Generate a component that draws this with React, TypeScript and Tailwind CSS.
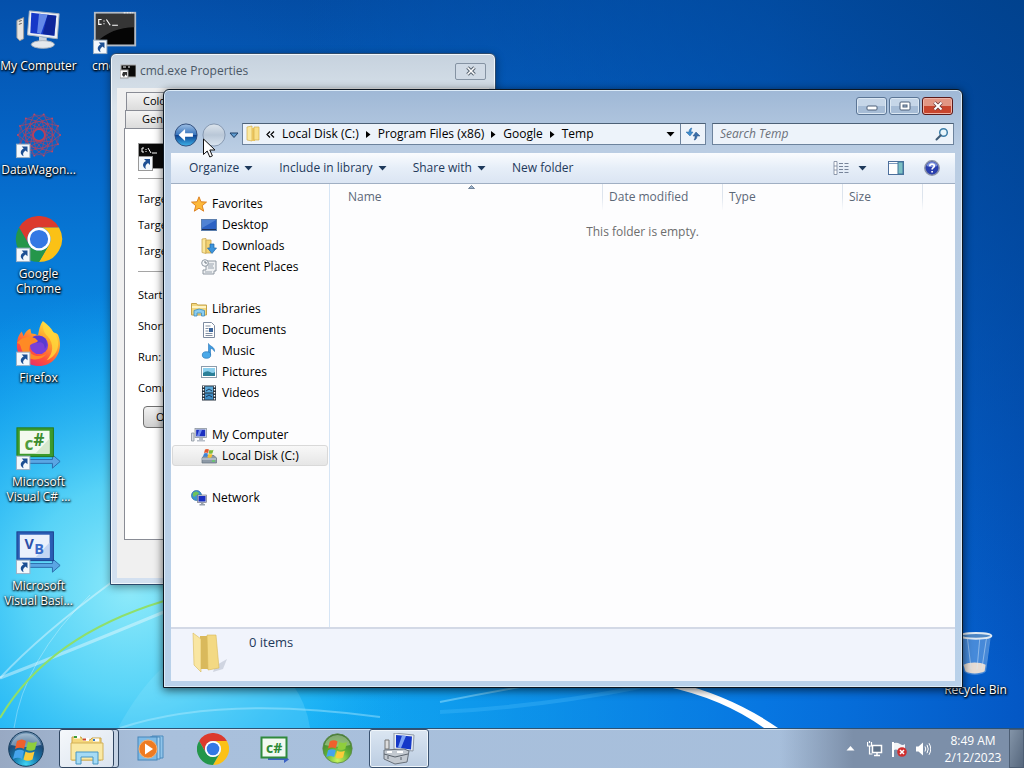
import type { ReactNode } from "react";

function Wallpaper() {
  return (
    <svg className="absolute inset-0 h-full w-full" viewBox="0 0 1024 768" preserveAspectRatio="none" aria-hidden="true">
      <defs>
        <linearGradient id="wp-base" x1="0" y1="0" x2="0" y2="1">
          <stop offset="0" stopColor="#0450ab" />
          <stop offset="0.2" stopColor="#0566c8" />
          <stop offset="0.45" stopColor="#0a8ce4" />
          <stop offset="0.75" stopColor="#12a8f2" />
          <stop offset="1" stopColor="#12aef5" />
        </linearGradient>
        <radialGradient id="wp-glow" gradientUnits="userSpaceOnUse" cx="130" cy="590" r="300">
          <stop offset="0" stopColor="#8eeafa" />
          <stop offset="0.35" stopColor="#5fd8f8" stopOpacity="0.9" />
          <stop offset="0.7" stopColor="#2cbdf6" stopOpacity="0.5" />
          <stop offset="1" stopColor="#12a4f2" stopOpacity="0" />
        </radialGradient>
        <linearGradient id="wp-right" x1="0" y1="0" x2="1" y2="0">
          <stop offset="0.3" stopColor="#0468d6" stopOpacity="0" />
          <stop offset="0.75" stopColor="#0468dc" stopOpacity="0.8" />
          <stop offset="1" stopColor="#0457c4" />
        </linearGradient>
        <linearGradient id="wp-dark" x1="0" y1="1" x2="1" y2="0">
          <stop offset="0.55" stopColor="#01428e" stopOpacity="0" />
          <stop offset="1" stopColor="#01428e" />
        </linearGradient>
      </defs>
      <rect width="1024" height="768" fill="url(#wp-base)" />
      <rect width="1024" height="768" fill="url(#wp-right)" />
      <rect width="1024" height="768" fill="url(#wp-dark)" />
      <rect width="1024" height="768" fill="url(#wp-glow)" />
      <path d="M118 728 Q160 650 215 640 Q300 660 310 728Z" fill="#9eeaff" opacity="0.2" />
      <path d="M0 678 Q60 655 164 612" fill="none" stroke="#fff" strokeWidth="3" opacity="0.4" />
      <path d="M0 678 Q40 635 112 582" fill="none" stroke="#fff" strokeWidth="2" opacity="0.4" />
      <path d="M14 728 Q24 660 90 595" fill="none" stroke="#fff" strokeWidth="1" opacity="0.3" />
      <path d="M0 718 Q48 636 164 601" fill="none" stroke="#8fdf6a" strokeWidth="2" />
      <path d="M120 728 Q220 695 380 717" fill="none" stroke="#bff0ff" strokeWidth="2" opacity="0.4" />
      <path d="M440 702 Q480 694 520 687" fill="none" stroke="#9be4ff" strokeWidth="2" opacity="0.5" />
      <path d="M440 712 Q540 707 640 687" fill="none" stroke="#5bc8ff" strokeWidth="4" opacity="0.25" />
      <path d="M664 686 Q722 698 764 728 H778 Q732 696 674 682Z" fill="#fff" />
    </svg>
  );
}

function ShortcutArrow() {
  return (
    <g transform="translate(0 33)">
      <rect x="0.5" y="0.5" width="14" height="14" fill="#f4f8fc" stroke="#9db0c4" />
      <path d="M6 3h6v6l-2-2c-3 2-3 4-2 6-4-2-4-6 0-8z" fill="#1d4f93" />
    </g>
  );
}

function ComputerArt() {
  return (
    <>
      <path d="M1 13l7-3v22l-4 2-3-3z" fill="#e7e4df" stroke="#9a9a9a" />
      <path d="M3 14l3-1M3 17l3-1" stroke="#555" />
      <path d="M14 3l31 3-2 26-31-4z" fill="#e9eef4" stroke="#a9b3bf" />
      <path d="M16 5l26 3-2 21-25-3z" fill="#1538c8" />
      <path d="M24 6l9 1-7 20-4-1z" fill="#7fa4f4" opacity="0.75" />
      <path d="M33 7l9 1-2 21-12-2z" fill="#0a1f86" opacity="0.7" />
      <path d="M24 30l8 1v7h-8z" fill="#c9d2dc" />
      <ellipse cx="28" cy="38" rx="12" ry="4" fill="#e4e8ed" stroke="#aab2bb" />
    </>
  );
}

function CmdArt() {
  return (
    <>
      <rect x="2" y="5" width="42" height="34" fill="#050505" stroke="#b4bcc6" strokeWidth="2" />
      <path d="M3 6h40v14Q20 20 3 36z" fill="#4a4a4a" opacity="0.7" />
      <path d="M32 5h10" stroke="#fff" strokeDasharray="2 1" />
      <path d="M9 12H6v5h3M11.5 13v1M11.5 16v1M14 12l4 6M20 18h6" fill="none" stroke="#fff" strokeWidth="1.2" />
    </>
  );
}

function ChromeArt() {
  return (
    <>
      <path d="M24 12H44.8A24 24 0 0 0 3.2 12L13.6 30A12 12 0 0 1 24 12z" fill="#dc3a2d" />
      <path d="M24 12H44.8A24 24 0 0 1 24 48L34.4 30A12 12 0 0 0 24 12z" fill="#fbc116" />
      <path d="M34.4 30L24 48A24 24 0 0 1 3.2 12L13.6 30A12 12 0 0 0 34.4 30z" fill="#24964a" />
      <circle cx="24" cy="24" r="12" fill="#fff" />
      <circle cx="24" cy="24" r="9.5" fill="#3478e4" />
    </>
  );
}

function FirefoxArt() {
  return (
    <>
      <defs>
        <linearGradient id="ff-body" x1="0.8" y1="0" x2="0.2" y2="1">
          <stop offset="0" stopColor="#fff04a" />
          <stop offset="0.35" stopColor="#ffa42c" />
          <stop offset="0.7" stopColor="#ff4f3e" />
          <stop offset="1" stopColor="#e22877" />
        </linearGradient>
      </defs>
      <path d="M28 1c5 4 9 7 11 12 2 0 4 1 5 3 6 15-3 32-20 32C10 48 0 37 1 25c0-5 2-10 5-13l2 5c1-4 4-7 7-8l1 5c3 0 5 1 7 2 1-6 2-11 5-15z" fill="url(#ff-body)" />
      <circle cx="24" cy="26" r="9.5" fill="#7a40d8" />
      <path d="M17 18c4-3 11-2 14 2 2 5 1 8-1 10 0-6-4-8-8-6z" fill="#5a3ad0" />
      <path d="M1 24c4-6 12-8 19-5l3 3c-3 3-8 2-9 6-2 9 11 12 18 7-6 9-20 8-25-2-3-5-1-8-6-9z" fill="#ff8a25" />
      <path d="M29 2c-2 6 0 11 4 15 7 8 6 18-1 25 12-5 15-18 9-27-3-5-9-7-12-13z" fill="#ffd93c" opacity="0.8" />
    </>
  );
}

// Wire sphere logo: chords between evenly spaced points on two rings
function WagonArt() {
  const at = (i: number, r: number) => {
    const a = (i * Math.PI) / 7;
    return [24 + r * Math.cos(a), 24 + r * Math.sin(a)];
  };
  const chord = (r: number, step: number) =>
    Array.from({ length: 14 }, (_, i) => `M${at(i, r).join(" ")}L${at(i + step, r).join(" ")}`).join("");
  return (
    <g fill="none" stroke="#b8405c" strokeWidth="0.9">
      <path d={chord(22, 4)} opacity="0.8" />
      <path d={chord(22, 2)} opacity="0.4" />
      <path d={chord(15, 5)} opacity="0.8" />
      <circle cx="24" cy="24" r="6" strokeWidth="1.5" />
      {Array.from({ length: 14 }, (_, i) => (
        <circle key={i} cx={at(i, 22)[0]} cy={at(i, 22)[1]} r="1" fill="#b84a68" stroke="none" />
      ))}
    </g>
  );
}

function StudioArt({ kind }: { kind: "cs" | "vb" }) {
  const cs = kind === "cs";
  return (
    <>
      <path d="M14 37h24v-5l8 7-8 7v-5H14z" fill="#5aa6e4" stroke="#2b6cab" />
      <rect x="1" y="4" width="38" height="30" fill={cs ? "#3c9a2c" : "#2a5db4"} stroke={cs ? "#257a1c" : "#1b3f8d"} />
      <rect x="4" y="7" width="31" height="24" fill={cs ? "#f3faef" : "#eaf1fc"} />
      <path d="M20 31L35 15v16z" fill={cs ? "#d5e8cd" : "#c3d5f3"} />
      <text x="9" y={cs ? 27 : 22} fontSize={cs ? 18 : 15} fontWeight="700" fill={cs ? "#4e9c3c" : "#2c4fa8"} className="font-['Open_Sans',sans-serif]">
        {cs ? "c" : "V"}
      </text>
      <text x={cs ? 18 : 19} y={cs ? 23 : 27} fontSize={cs ? 18 : 15} fontWeight="700" fill={cs ? "#3c8c2e" : "#3a6bc8"} className="font-['Open_Sans',sans-serif]">
        {cs ? "#" : "B"}
      </text>
    </>
  );
}

function BinArt() {
  return (
    <g transform="translate(-2 -2)">
      <path d="M10 6l4 37c4 4 18 4 22 0l5-37z" fill="#a9cdf2" opacity="0.4" stroke="#bcd8f2" />
      <path d="M13 36c6-3 17-3 23 0l-1 7c-5 3-16 3-20 0z" fill="#e6dcd4" />
      <path d="M17 8l4 33M30 8l-3 33M37 8l-5 33" stroke="#dcecfa" opacity="0.5" />
      <ellipse cx="26" cy="6" rx="16" ry="3" fill="#4d86c4" stroke="#dfe9f2" strokeWidth="2" />
    </g>
  );
}

type DesktopIconProps = { label: string; shortcut?: boolean; children: ReactNode };

function DesktopIcon({ label, shortcut, children }: DesktopIconProps) {
  return (
    <button type="button" className="flex h-[104px] w-[77px] flex-col items-center gap-0.5 pt-2">
      <svg className="size-12 shrink-0" viewBox="-1 0 50 50" aria-hidden="true">
        {children}
        {shortcut && <ShortcutArrow />}
      </svg>
      <span className="w-20 text-center text-xs leading-[15px] text-white [text-shadow:0_1px_2px_#000,1px_1px_2px_#000,0_0_3px_#000a]">
        {label}
      </span>
    </button>
  );
}

function DesktopIcons() {
  return (
    <>
      <div className="relative grid w-max auto-cols-[77px] grid-flow-col grid-rows-[repeat(6,104px)]">
        <DesktopIcon label="My Computer"><ComputerArt /></DesktopIcon>
        <DesktopIcon label="DataWagon..." shortcut><WagonArt /></DesktopIcon>
        <DesktopIcon label="Google Chrome" shortcut><ChromeArt /></DesktopIcon>
        <DesktopIcon label="Firefox" shortcut><FirefoxArt /></DesktopIcon>
        <DesktopIcon label="Microsoft Visual C# ..." shortcut><StudioArt kind="cs" /></DesktopIcon>
        <DesktopIcon label="Microsoft Visual Basi..." shortcut><StudioArt kind="vb" /></DesktopIcon>
        <DesktopIcon label="cmd.exe" shortcut><CmdArt /></DesktopIcon>
      </div>
      <div className="absolute right-[10px] bottom-0">
        <DesktopIcon label="Recycle Bin"><BinArt /></DesktopIcon>
      </div>
    </>
  );
}

function PropertiesDialog() {
  return (
    <section className="absolute top-[53px] left-[110px] flex h-[532px] w-[386px] flex-col rounded-t-md border border-[#2c4a6c] bg-linear-to-b from-[#c6d2de] via-[#dbe4ec] via-10% to-[#d3e0f0] px-[6px] pb-[6px] shadow-[inset_0_0_0_1px_#f2f7fb,0_2px_8px_#0006]">
      <header className="flex h-[34px] shrink-0 items-center gap-1 pl-[3px]">
        <svg className="size-4" viewBox="0 0 16 16" aria-hidden="true">
          <rect x="1" y="2" width="15" height="12" fill="#0a0a0a" stroke="#aaa" />
          <path d="M3 4h3M8 4h2" stroke="#fff" />
          <rect x="0" y="7" width="8" height="8" fill="#fff" stroke="#999" />
          <path d="M3 9h4v4L5.500 11.500 4 14 2 12z" fill="#333" />
        </svg>
        <h2 className="flex-1 text-xs text-[#4b5866]">cmd.exe Properties</h2>
        <button type="button" aria-label="Close properties" className="mr-[3px] flex h-[17px] w-[31px] items-center justify-center rounded-[2px] border border-[#8593a3] bg-[#d0dae5]">
          <svg className="h-2.5 w-3" viewBox="0 0 12 10" aria-hidden="true">
            <path d="M2.5 1.5l7 7M9.5 1.5l-7 7" stroke="#566270" strokeWidth="3.5" />
            <path d="M2.5 1.5l7 7M9.5 1.5l-7 7" stroke="#fff" strokeWidth="1.5" />
          </svg>
        </button>
      </header>
      <div className="flex min-h-0 flex-1 flex-col bg-[#f0f0f0] px-[7px] pt-1 pb-[38px] text-[11px] text-black">
        <div className="ml-[2px] flex h-[18px] shrink-0">
          <button type="button" className="border border-b-0 border-[#898c95] bg-linear-to-b from-[#f4f4f4] to-[#dcdcdc] px-4">Colors</button>
        </div>
        <div className="ml-px flex h-[18px] shrink-0">
          <button type="button" className="border border-b-0 border-[#898c95] bg-linear-to-b from-[#f4f4f4] to-[#dcdcdc] px-4">General</button>
        </div>
        <div className="flex-1 border border-[#898c95] bg-white px-[13px] pt-[13px]">
          <svg className="h-8 w-8" viewBox="0 0 32 32" aria-hidden="true">
            <rect x="0.5" y="1.5" width="31" height="25" fill="#0a0a0a" stroke="#999" />
            <path d="M6 6H4v4h2M8 7v1M8 9v1M10 6l3 5M14 11h5" fill="none" stroke="#fff" />
            <rect x="0.5" y="14.5" width="14" height="14" fill="#f4f8fc" stroke="#999" />
            <path d="M6 17h6v6l-2-2c-3 2-3 4-2 6-4-2-4-6 0-8z" fill="#1d4f93" />
          </svg>
          <hr className="mt-1 border-[#a5a5a5]" />
          <div className="flex h-[92px] flex-col justify-center gap-[10px] leading-4">
            <p>Target type:</p>
            <p>Target location:</p>
            <p>Target:</p>
          </div>
          <hr className="border-[#a5a5a5]" />
          <div className="flex flex-col gap-[15px] pt-[15px] leading-4">
            <p>Start in:</p>
            <p>Shortcut key:</p>
            <p>Run:</p>
            <p>Comment:</p>
          </div>
          <button type="button" className="mt-[10px] ml-[5px] h-[22px] rounded-sm border border-[#707070] bg-linear-to-b from-[#f2f2f2] to-[#cfcfcf] px-3">
            Open File Location
          </button>
        </div>
      </div>
    </section>
  );
}

function Caret() {
  return (
    <svg className="h-[5px] w-[9px]" viewBox="0 0 9 5" aria-hidden="true">
      <path d="M0.5 0h8l-4 4.5z" fill="currentColor" />
    </svg>
  );
}

function Crumb({ children }: { children: ReactNode }) {
  return (
    <>
      <button type="button" className="shrink-0 whitespace-nowrap">{children}</button>
      <svg className="h-[7px] w-[5px] shrink-0 last:hidden" viewBox="0 0 5 7" aria-hidden="true">
        <path d="M0 0l4.500 3.500L0 7z" fill="#000" />
      </svg>
    </>
  );
}

function CaptionButtons() {
  const plain = "flex h-[18px] items-center justify-center rounded-[3px] border border-[#5b7595] bg-linear-to-b from-[#c6d6e8] from-50% to-[#a6bcd6] to-50% shadow-[inset_0_0_0_1px_#dbe7f3]";
  return (
    <div className="flex h-[33px] shrink-0 justify-end gap-[2px] pt-[7px] pr-[2px]">
      <button type="button" aria-label="Minimize" className={`${plain} w-[31px]`}>
        <svg className="h-2.5 w-3" viewBox="0 0 12 10" aria-hidden="true">
          <rect x="1" y="5" width="10" height="4" rx="1" fill="#fff" stroke="#4d5f78" />
        </svg>
      </button>
      <button type="button" aria-label="Maximize" className={`${plain} w-[31px]`}>
        <svg className="h-2.5 w-3" viewBox="0 0 12 10" aria-hidden="true">
          <rect x="1" y="1" width="10" height="8" rx="1" fill="#fff" stroke="#4d5f78" />
          <rect x="4" y="4" width="4" height="2" fill="#a6bcd6" stroke="#4d5f78" />
        </svg>
      </button>
      <button type="button" aria-label="Close" className="flex h-[18px] w-[31px] items-center justify-center rounded-[3px] border border-[#5a1a1a] bg-linear-to-b from-[#e29684] from-50% to-[#c8452e] to-50% shadow-[inset_0_0_0_1px_#efb3a6]">
        <svg className="h-2.5 w-3" viewBox="0 0 12 10" aria-hidden="true">
          <path d="M2.5 1.5l7 7M9.5 1.5l-7 7" stroke="#6b3a3c" strokeWidth="3.5" />
          <path d="M2.5 1.5l7 7M9.5 1.5l-7 7" stroke="#fff" strokeWidth="2" />
        </svg>
      </button>
    </div>
  );
}

function AddressRow() {
  return (
    <div className="flex h-[30px] shrink-0 items-start pr-px pl-[3px]">
      <button type="button" aria-label="Back" className="shrink-0">
        <svg className="block size-6" viewBox="0 0 26 26" aria-hidden="true">
          <defs>
            <linearGradient id="back-fill" x1="0" y1="0" x2="0" y2="1">
              <stop offset="0" stopColor="#9fc0e6" />
              <stop offset="0.48" stopColor="#3a76bd" />
              <stop offset="0.5" stopColor="#0b3f90" />
              <stop offset="1" stopColor="#3fb4ea" />
            </linearGradient>
          </defs>
          <circle cx="13" cy="13" r="12" fill="url(#back-fill)" stroke="#2c4a78" />
          <path d="M5 13l7-6.500v4.500h8.500v4H12v4.500z" fill="#fff" />
        </svg>
      </button>
      <button type="button" aria-label="Forward" className="ml-1 shrink-0">
        <svg className="block size-6" viewBox="0 0 26 26" aria-hidden="true">
          <defs>
            <linearGradient id="fwd-fill" x1="0" y1="0" x2="0" y2="1">
              <stop offset="0" stopColor="#dde5ed" />
              <stop offset="0.5" stopColor="#b9c7d7" />
              <stop offset="1" stopColor="#dbe6f1" />
            </linearGradient>
          </defs>
          <circle cx="13" cy="13" r="12" fill="url(#fwd-fill)" stroke="#8194ac" />
        </svg>
      </button>
      <button type="button" aria-label="Recent pages" className="flex h-6 w-4 shrink-0 items-center justify-center">
        <svg className="h-[7px] w-2.5" viewBox="0 0 10 7" aria-hidden="true">
          <path d="M1 1h8L5 5.500z" fill="#5f9cd0" stroke="#1e4068" />
        </svg>
      </button>
      <div className="flex h-[22px] min-w-0 flex-1 items-center border border-[#6d839d] border-t-[#4c6076] bg-[#edf3fa] text-xs text-black">
        <svg className="ml-[2px] size-[18px] shrink-0" viewBox="0 0 18 18" aria-hidden="true">
          <path d="M2 2l5-1v15l-5-1z" fill="#fbe9a0" stroke="#d6b04c" strokeWidth="0.7" />
          <path d="M7 3h3v13H7z" fill="#ecc660" />
          <path d="M9 2h5v13H9z" fill="#f9df88" stroke="#d6b04c" strokeWidth="0.7" />
        </svg>
        <div className="flex min-w-0 flex-1 items-center gap-[7px] pl-[3px]">
          <svg className="h-[7px] w-[9px] shrink-0" viewBox="0 0 9 7" aria-hidden="true">
            <path d="M4 0.500l-3 3 3 3M8 0.500l-3 3 3 3" fill="none" stroke="#000" strokeWidth="1.2" />
          </svg>
          <Crumb>Local Disk (C:)</Crumb>
          <Crumb>Program Files (x86)</Crumb>
          <Crumb>Google</Crumb>
          <Crumb>Temp</Crumb>
        </div>
        <button type="button" aria-label="Previous locations" className="flex h-full w-[19px] items-center justify-center">
          <Caret />
        </button>
        <button type="button" aria-label="Refresh" className="flex h-full w-[25px] items-center justify-center border-l border-[#6d839d]">
          <svg className="h-3.5 w-4" viewBox="0 0 16 14" aria-hidden="true">
            <path d="M7 1C5 1 4 3 4 5H1l4 4 3-4H6c0-1 0-3 1-4z" fill="#3f8ccb" stroke="#2c6aa6" strokeWidth="0.5" />
            <path d="M9 13c2 0 3-2 3-4h3l-4-4-3 4h2c0 1 0 3-1 4z" fill="#3a6ea8" stroke="#2c5488" strokeWidth="0.5" />
          </svg>
        </button>
      </div>
      <label className="ml-[6px] flex h-[22px] w-[242px] shrink-0 items-center border border-[#6d839d] border-t-[#4c6076] bg-[#edf3fa] pr-1 pl-[7px]">
        <input type="search" aria-label="Search Temp" placeholder="Search Temp" className="min-w-0 flex-1 bg-transparent text-xs italic outline-none placeholder:text-[#6b7079]" />
        <svg className="size-3.5" viewBox="0 0 14 14" aria-hidden="true">
          <circle cx="8.5" cy="5.5" r="3.8" fill="#e8f5fb" stroke="#3d7ea8" strokeWidth="1.5" />
          <path d="M5.800 8.200L1.500 12.500" stroke="#3f5a75" strokeWidth="2" strokeLinecap="round" />
        </svg>
      </label>
    </div>
  );
}

function Toolbar() {
  return (
    <div className="flex h-[31px] shrink-0 items-center border-b border-[#a0afc3] bg-linear-to-b from-[#fafcfe] via-[#e6eef8] to-[#dbe5f3] pr-[15px] pl-[18px] text-xs text-[#1e395b]">
      <div className="flex flex-1 items-center gap-[26px]">
        <button type="button" className="flex items-center gap-[5px]">Organize<Caret /></button>
        <button type="button" className="flex items-center gap-[5px]">Include in library<Caret /></button>
        <button type="button" className="flex items-center gap-[5px]">Share with<Caret /></button>
        <button type="button">New folder</button>
      </div>
      <button type="button" aria-label="Change your view" className="flex items-center gap-[9px]">
        <svg className="h-3.5 w-4" viewBox="0 0 16 14" aria-hidden="true">
          <path d="M1 0.500h3v13H1zM1 5h3M1 9h3" fill="#fff" stroke="#77849a" strokeWidth="0.8" />
          <path d="M6 2.500h4M6 5.500h4M6 8.500h4M6 11.500h4M11.500 2.500h4M11.500 5.500h4M11.500 8.500h4M11.500 11.500h4" stroke="#77849a" strokeWidth="1" />
        </svg>
        <Caret />
      </button>
      <button type="button" aria-label="Show the preview pane" className="ml-[21px]">
        <svg className="block h-4 w-4" viewBox="0 0 16 16" aria-hidden="true">
          <rect x="0.5" y="1.5" width="15" height="13" fill="#fff" stroke="#4d6f9c" />
          <path d="M1 3.500h9" stroke="#7f9cc0" />
          <rect x="10" y="2" width="5" height="12" fill="#7cc0c4" stroke="#41749a" />
        </svg>
      </button>
      <button type="button" aria-label="Get help" className="ml-5">
        <svg className="block size-4" viewBox="0 0 16 16" aria-hidden="true">
          <circle cx="8" cy="8" r="7.2" fill="#2a3fae" stroke="#8b93a8" strokeWidth="1.5" />
          <path d="M2.500 6a5.800 5.800 0 0 1 11 0Q8 8 2.500 6z" fill="#8ea4e8" opacity="0.8" />
          <path d="M5.800 6.200C5.800 3.300 10.300 3.500 10.300 6c0 1.700-2.200 1.700-2.200 3.500M8.100 11v1.500" fill="none" stroke="#fff" strokeWidth="1.7" />
        </svg>
      </button>
    </div>
  );
}

const navIcons: Record<string, ReactNode> = {
  Favorites: <path d="M8 0.800l2 5 5.500 0.300-4.300 3.600 1.500 5.500L8 12.200l-4.700 3 1.500-5.500L0.500 6.100 6 5.800z" fill="#fdb93a" stroke="#d97a1a" strokeWidth="0.9" />,
  Desktop: (
    <>
      <rect x="0.5" y="2.5" width="15" height="11" fill="#2d62c4" stroke="#5c7fae" />
      <path d="M1 3h14L1 11z" fill="#6797dd" opacity="0.6" />
      <path d="M1 12.500h14" stroke="#1c2f58" />
    </>
  ),
  Downloads: (
    <>
      <path d="M1 1l4-0.500v15L1 14.500z" fill="#fbe69a" stroke="#c9a650" strokeWidth="0.8" />
      <path d="M5 2h5v13H5z" fill="#f3d272" stroke="#c9a650" strokeWidth="0.8" />
      <path d="M9 6h4v4h2.500L11 15.500 6.500 10H9z" fill="#3c95dc" stroke="#2166a6" strokeWidth="0.7" />
    </>
  ),
  "Recent Places": (
    <>
      <path d="M5 2h10v10h-2v3H2V11h3z" fill="#eef0f2" stroke="#8f98a2" />
      <path d="M7 5h6M7 7h5M7 9h6M4 13h7" stroke="#9aa4af" />
      <circle cx="4" cy="4" r="3.3" fill="#f6f8fa" stroke="#8f98a2" />
      <path d="M4 2v2h2" fill="none" stroke="#6c7680" />
    </>
  ),
  Libraries: (
    <>
      <path d="M0.500 2.500h5l1 1.500h9v10H0.500z" fill="#f2d77e" stroke="#c4a24b" />
      <path d="M1 6h14" stroke="#fff4c4" strokeWidth="2" />
      <path d="M3 15V9.500Q8 6.500 13.500 9.500V15h-3v-3H6v3z" fill="#8ccdf0" stroke="#3f8dbd" strokeWidth="0.8" />
    </>
  ),
  Documents: (
    <>
      <path d="M2.500 0.500h8l3 3v12h-11z" fill="#fff" stroke="#7d8ba0" />
      <path d="M4.500 4h5M4.500 6.500h3M4.500 9h3M4.500 11.500h7M4.500 13.500h7" stroke="#8390a3" />
      <rect x="8" y="6" width="4" height="4" fill="#3a659c" />
    </>
  ),
  Music: (
    <>
      <path d="M7.500 0.500c1 3 6.500 3 6 8-1-2-2.500-3-4-3v6.500h-2z" fill="#3f9be0" stroke="#2775b8" strokeWidth="0.6" />
      <ellipse cx="5.5" cy="12" rx="4.2" ry="3.3" fill="#4ba9e8" stroke="#2775b8" strokeWidth="0.7" />
    </>
  ),
  Pictures: (
    <>
      <rect x="0.5" y="2.5" width="15" height="11" fill="#fff" stroke="#8c9bab" />
      <rect x="2" y="4" width="12" height="8" fill="#8dd0ee" />
      <path d="M2 9q4-3 7-1t5 0v4H2z" fill="#2b7f98" />
    </>
  ),
  Videos: (
    <>
      <rect x="1" y="0.5" width="14" height="15" fill="#26323e" />
      <rect x="4" y="1.5" width="8" height="6" fill="#5aa7d8" />
      <rect x="4" y="8.5" width="8" height="6" fill="#3f8cc4" />
      <path d="M2.500 1v14M13.500 1v14" stroke="#fff" strokeWidth="1.4" strokeDasharray="1.5 1.5" />
      <path d="M5 6l3-2 3 2M5 12l3-2 3 2" fill="none" stroke="#1c3c5a" />
    </>
  ),
  "My Computer": (
    <>
      <path d="M0.500 6h2.500v8H0.500z" fill="#dcdfe3" stroke="#8c949e" strokeWidth="0.8" />
      <rect x="4" y="1.5" width="11.5" height="9" fill="#d5dbe4" stroke="#8c949e" strokeWidth="0.8" />
      <rect x="5.2" y="2.7" width="9" height="6.6" fill="#1a2fc0" />
      <path d="M8 3h3L8.500 9H6z" fill="#6b86ec" />
      <path d="M8 11h4v2h2v1.500H6V13h2z" fill="#b7bec8" />
    </>
  ),
  "Local Disk (C:)": (
    <>
      <path d="M1 10l2-2.500h10l2.500 2.500v5H1z" fill="#8d99a6" stroke="#667380" strokeWidth="0.7" />
      <path d="M1 11h14" stroke="#d3dae0" />
      <path d="M11 13h3" stroke="#5fd35f" strokeWidth="1.4" />
      <path d="M4 1.500q2-1 4 0l-1 3.500q-2-1-4 0z" fill="#e2562c" />
      <path d="M8.500 1.700q2 1 4 0l-1 3.500q-2 1-4 0z" fill="#7dbb3a" />
      <path d="M3 5.500q2-1 4 0L6 9q-2-1-4 0z" fill="#3c82d4" />
      <path d="M7.500 5.800q2 1 4 0l-1 3.500q-2 1-4 0z" fill="#f5c032" />
    </>
  ),
  Network: (
    <>
      <circle cx="5.5" cy="5.5" r="5" fill="#3c95d0" stroke="#23699f" strokeWidth="0.7" />
      <path d="M2 3q3-3 6 0-1 3-3 2-1 3-3 1z" fill="#6ec45a" />
      <rect x="6.5" y="5" width="9" height="7.5" fill="#d5dbe4" stroke="#667" strokeWidth="0.6" />
      <rect x="7.5" y="6" width="7" height="5.5" fill="#1a2fc0" />
      <path d="M10 12.500h2.500V14H14v1.500H8.500V14H10z" fill="#98a1ad" />
    </>
  ),
};

const navGroups = [
  { name: "Favorites", items: ["Desktop", "Downloads", "Recent Places"] },
  { name: "Libraries", items: ["Documents", "Music", "Pictures", "Videos"] },
  { name: "My Computer", items: ["Local Disk (C:)"] },
  { name: "Network", items: [] },
];

function NavItem({ name, child }: { name: string; child?: boolean }) {
  const selected = name === "Local Disk (C:)";
  return (
    <button
      type="button"
      className={`flex h-[21px] w-full items-center gap-[5px] rounded-[3px] border ${child ? "pl-[28px]" : "pl-[18px]"} ${
        selected ? "border-[#d9d9d9] bg-linear-to-b from-[#f8f8f8] to-[#e6e6e6]" : "border-transparent"
      }`}
    >
      <svg className="size-4 shrink-0" viewBox="0 0 16 16" aria-hidden="true">{navIcons[name]}</svg>
      <span className="whitespace-nowrap">{name}</span>
    </button>
  );
}

function NavPane() {
  return (
    <nav className="flex w-[159px] shrink-0 flex-col gap-[21px] border-r border-[#d6e5f5] px-px pt-[9px] text-xs text-black">
      {navGroups.map((group) => (
        <div key={group.name}>
          <NavItem name={group.name} />
          {group.items.map((item) => (
            <NavItem key={item} name={item} child />
          ))}
        </div>
      ))}
    </nav>
  );
}

function FileList() {
  const head = "border-r pl-[6px] font-normal [border-image:linear-gradient(#dde4ed_50%,#fdfdfe)_1]";
  return (
    <div className="relative min-w-0 flex-1">
      <table className="w-full table-fixed border-separate border-spacing-0 text-left text-xs text-[#5c6878]">
        <thead>
          <tr className="h-[26px]">
            <th className="w-[273px] border-r pl-[18px] font-normal [border-image:linear-gradient(#dde4ed_50%,#fdfdfe)_1]" aria-sort="ascending">Name</th>
            <th className={`${head} w-[120px]`}>Date modified</th>
            <th className={`${head} w-[120px]`}>Type</th>
            <th className={`${head} w-[80px]`}>Size</th>
            <td />
          </tr>
        </thead>
        <tbody>
          <tr className="h-11">
            <td colSpan={5} className="text-center text-[#6d6d6d]">This folder is empty.</td>
          </tr>
        </tbody>
      </table>
      <svg className="absolute top-px left-[138px] h-1 w-[7px]" viewBox="0 0 7 4" aria-hidden="true">
        <path d="M0.500 3.500l3-3 3 3z" fill="#9ab2cc" stroke="#4c607a" strokeWidth="0.7" />
      </svg>
    </div>
  );
}

function ExplorerWindow() {
  return (
    <section className="absolute top-[89px] right-[61px] bottom-[40px] left-[163px] flex flex-col rounded-t-md border border-[#0d1722] bg-linear-to-b from-[#9fb8d6] via-[#bacde3] via-10% to-[#b9d1ea] px-[7px] pb-[6px] shadow-[inset_0_0_0_1px_#dcebf8,0_2px_10px_#000a]">
      <CaptionButtons />
      <AddressRow />
      <Toolbar />
      <div className="flex min-h-0 flex-1 bg-[#fdfdfe]">
        <NavPane />
        <FileList />
      </div>
      <footer className="flex h-[54px] shrink-0 border-t-2 border-[#d3d9e6] bg-[#f1f4fc] text-[13px] text-[#1e395b]">
        <svg className="mt-[3px] ml-[18px] h-[42px] w-[40px]" viewBox="0 0 40 42" aria-hidden="true">
          <path d="M26 34l12-7-4 10-10 3z" fill="#9fa8b8" opacity="0.4" />
          <path d="M11 4h10v33H11z" fill="#d9b95c" />
          <path d="M18 3h9l3 33-11 2z" fill="#f3d983" stroke="#d9b959" strokeWidth="0.6" />
          <path d="M4 1l8 6v33l-7-7z" fill="#f9e6a2" stroke="#d9b959" strokeWidth="0.6" />
        </svg>
        <span className="mt-1 ml-5">0 items</span>
      </footer>
    </section>
  );
}

function WindowsFlag() {
  return (
    <>
      <path d="M9 10q5-3 9 0l-2 8q-4-2.500-9 0z" fill="#f0602c" />
      <path d="M20 10.500q4 2.500 9 0l-2 8q-5 2.500-9 0z" fill="#8fce3c" />
      <path d="M7 20q5-2.500 9 0l-2 8q-4-2.500-9 0z" fill="#46a4ec" />
      <path d="M17.500 20.500q4 2.500 9 0l-2 8q-5 2.500-9 0z" fill="#fbcb3a" />
    </>
  );
}

function Taskbar() {
  const slot = "flex h-full w-[60px] shrink-0 items-center justify-center";
  return (
    <footer className="relative flex h-10 shrink-0 items-center border-t border-[#2c5274] bg-linear-to-r from-[#98a9c3] via-[#a9c0dc] via-15% to-[#a6bedb] shadow-[inset_0_1px_0_#d3e2f1]">
      <button type="button" aria-label="Start" className="ml-2 shrink-0">
        <svg className="block size-9" viewBox="0 0 36 36" aria-hidden="true">
          <defs>
            <radialGradient id="orb" cx="0.5" cy="0.95" r="0.9">
              <stop offset="0" stopColor="#3fd6f6" />
              <stop offset="0.4" stopColor="#1779ac" />
              <stop offset="0.75" stopColor="#1c4a78" />
              <stop offset="1" stopColor="#6f93b4" />
            </radialGradient>
          </defs>
          <circle cx="18" cy="18" r="17.3" fill="url(#orb)" stroke="#173c5c" />
          <path d="M3 14a15.500 15.500 0 0 1 30 0Q18 18 3 14z" fill="#dfeaf4" opacity="0.45" />
          <WindowsFlag />
        </svg>
      </button>
      <div className="ml-[15px] flex h-full min-w-0 flex-1 gap-[2px]">
        <button type="button" aria-label="Windows Explorer" className="flex h-full w-[60px] shrink-0 rounded-[3px] border border-[#2f4560] bg-[#c5d3e4]">
          <span className="flex h-full w-[54px] items-center justify-center rounded-[3px] border-r border-[#2f4560] bg-linear-to-br from-[#f5f8fb] to-[#dbe4ef]">
            <svg className="h-[32px] w-[34px]" viewBox="0 0 34 32" aria-hidden="true">
              <path d="M2 4h9l2 3h7l2-2h9v22H2z" fill="#f5d77c" stroke="#c9a44a" />
              <path d="M4 4h6M13 6.500h6M23 7h6" stroke="#fff" strokeWidth="3" />
              <path d="M4 4h3" stroke="#3a9c3a" strokeWidth="2" />
              <path d="M13 6.500h3" stroke="#c8442e" strokeWidth="2" />
              <path d="M23 7h2" stroke="#3a78c4" strokeWidth="2" />
              <path d="M1 10h32v17H1z" fill="#fae9a4" stroke="#d3b158" />
              <path d="M6 31V19h22v12h-5v-7H11v7z" fill="#a5dbf5" stroke="#4896c4" />
            </svg>
          </span>
        </button>
        <button type="button" aria-label="Windows Media Player" className={slot}>
          <svg className="h-[28px] w-[30px]" viewBox="0 0 30 28" aria-hidden="true">
            <path d="M16 1h11v22H16z" fill="#8fc4ea" stroke="#4c8bbd" />
            <path d="M14 2h10v22H14z" fill="#a8d4f2" stroke="#4c8bbd" />
            <rect x="2" y="2" width="19" height="23" fill="#7ebbe6" stroke="#4686b9" />
            <circle cx="12" cy="14" r="9" fill="#ee7b22" stroke="#f5b070" />
            <path d="M9 8.500l8 5.500-8 5.500z" fill="#fff" />
          </svg>
        </button>
        <button type="button" aria-label="Google Chrome" className={slot}>
          <svg className="size-8" viewBox="0 0 48 48" aria-hidden="true"><ChromeArt /></svg>
        </button>
        <button type="button" aria-label="Visual C#" className={slot}>
          <svg className="h-[28px] w-[30px]" viewBox="0 0 30 28" aria-hidden="true">
            <path d="M8 23h16v-3l5 4.500-5 3.500v-3H8z" fill="#3b62c4" />
            <rect x="1.5" y="2.5" width="25" height="20" fill="#f1f9f1" stroke="#2f8a3c" strokeWidth="2" />
            <text x="6" y="18" fontSize="14" fontWeight="700" fill="#2c8a35" className="font-['Open_Sans',sans-serif]">c#</text>
          </svg>
        </button>
        <button type="button" aria-label="Windows Media Center" className={slot}>
          <svg className="size-[31px]" viewBox="0 0 36 36" aria-hidden="true">
            <defs>
              <radialGradient id="mce" cx="0.5" cy="0.9" r="0.9">
                <stop offset="0" stopColor="#c8f560" />
                <stop offset="0.5" stopColor="#5cac34" />
                <stop offset="1" stopColor="#3c7030" />
              </radialGradient>
            </defs>
            <circle cx="18" cy="18" r="17" fill="url(#mce)" stroke="#5d8a4c" />
            <path d="M3 14a15.500 15.500 0 0 1 30 0Q18 18 3 14z" fill="#e6f4d8" opacity="0.4" />
            <WindowsFlag />
          </svg>
        </button>
        <button type="button" aria-label="cmd.exe Properties" className={`${slot} rounded-[3px] border border-[#3a5270] bg-linear-to-b from-[#dbe6f2] to-[#bccde2] shadow-[inset_0_0_0_1px_#f0f6fb]`}>
          <svg className="size-8" viewBox="0 0 32 32" aria-hidden="true">
            <path d="M11 0l20 2-1 16-19-2z" fill="#e9eef4" stroke="#8d98a6" />
            <path d="M13 2l16 1.500-1 13-15-2z" fill="#1538c8" />
            <path d="M19 2.500l4 0.500-5 12-3-0.500z" fill="#7fa4f4" />
            <path d="M2 7h4v9H2z" fill="#dcdcdc" stroke="#777" />
            <path d="M1 17l20-1 5 2-2 11-12 2-11-5z" fill="#c3c9d0" stroke="#68707a" />
            <path d="M1 21l11 3 13-3M5 23v3M18 24v3" fill="none" stroke="#5b636d" />
            <path d="M4 19h5M14 19h6" stroke="#fff" strokeWidth="2" />
          </svg>
        </button>
      </div>
      <div className="flex h-full shrink-0 items-center bg-linear-to-r from-[#7c8fa900] to-[#7c8fa9] to-30% pl-[60px]">
        <button type="button" aria-label="Show hidden icons" className="px-[6px]">
          <svg className="block h-[5px] w-[9px]" viewBox="0 0 9 5" aria-hidden="true"><path d="M0.500 4.500h8L4.500 0z" fill="#fff" /></svg>
        </button>
        <button type="button" aria-label="Network status" className="ml-[6px]">
          <svg className="block size-4" viewBox="0 0 16 16" aria-hidden="true">
            <path d="M5.500 4.500h9v7h-9zM10 12v2.500M7 14.500h6" fill="#5f7289" stroke="#fff" strokeWidth="1.5" />
            <path d="M0.500 1v4h4V1M2.500 0v2M2.500 5v8h3" fill="none" stroke="#fff" strokeWidth="1.2" />
          </svg>
        </button>
        <button type="button" aria-label="Action Center" className="ml-2">
          <svg className="block size-4" viewBox="0 0 16 16" aria-hidden="true">
            <path d="M2 1v15" stroke="#fff" strokeWidth="2" />
            <path d="M3 2q3-1 6 1t5 0v7q-3 1-6-0.500T3 9z" fill="#fff" opacity="0.9" />
            <circle cx="11" cy="11" r="4.8" fill="#cf2f2f" />
            <path d="M9 9l4 4M13 9l-4 4" stroke="#fff" strokeWidth="1.5" />
          </svg>
        </button>
        <button type="button" aria-label="Volume" className="ml-2">
          <svg className="block size-4" viewBox="0 0 16 16" aria-hidden="true">
            <path d="M1 5.500h2.500L8 1.500v13L3.500 10.500H1z" fill="#fff" />
            <path d="M10 5.500q1.500 2.500 0 5M12 3.800q2.500 4.200 0 8.400M14 2.200q3.500 5.800 0 11.600" fill="none" stroke="#fff" />
          </svg>
        </button>
        <div className="w-[78px] pl-1.5 text-center text-xs leading-[17px] whitespace-nowrap text-white">
          <p>8:49 AM</p>
          <p>2/12/2023</p>
        </div>
        <button type="button" aria-label="Show desktop" className="h-full w-[15px] border border-[#4d5e74] bg-linear-to-br from-[#8394a8] to-[#56677d]" />
      </div>
    </footer>
  );
}

function Cursor() {
  return (
    <svg className="absolute top-[138px] left-[203px] h-[20px] w-[13px]" viewBox="0 0 13 20" aria-hidden="true">
      <path d="M0.500 1v15.500l3.700-3.500 2.600 6 2.600-1.100-2.600-5.900h5.200z" fill="#fff" stroke="#111" />
    </svg>
  );
}

export default function App() {
  return (
    <div className="relative flex h-screen w-full flex-col overflow-hidden bg-[#0a6ed0] font-['Open_Sans','Noto_Sans',sans-serif]">
      <Wallpaper />
      <main className="relative min-h-0 flex-1">
        <DesktopIcons />
        <PropertiesDialog />
        <ExplorerWindow />
        <Cursor />
      </main>
      <Taskbar />
    </div>
  );
}
